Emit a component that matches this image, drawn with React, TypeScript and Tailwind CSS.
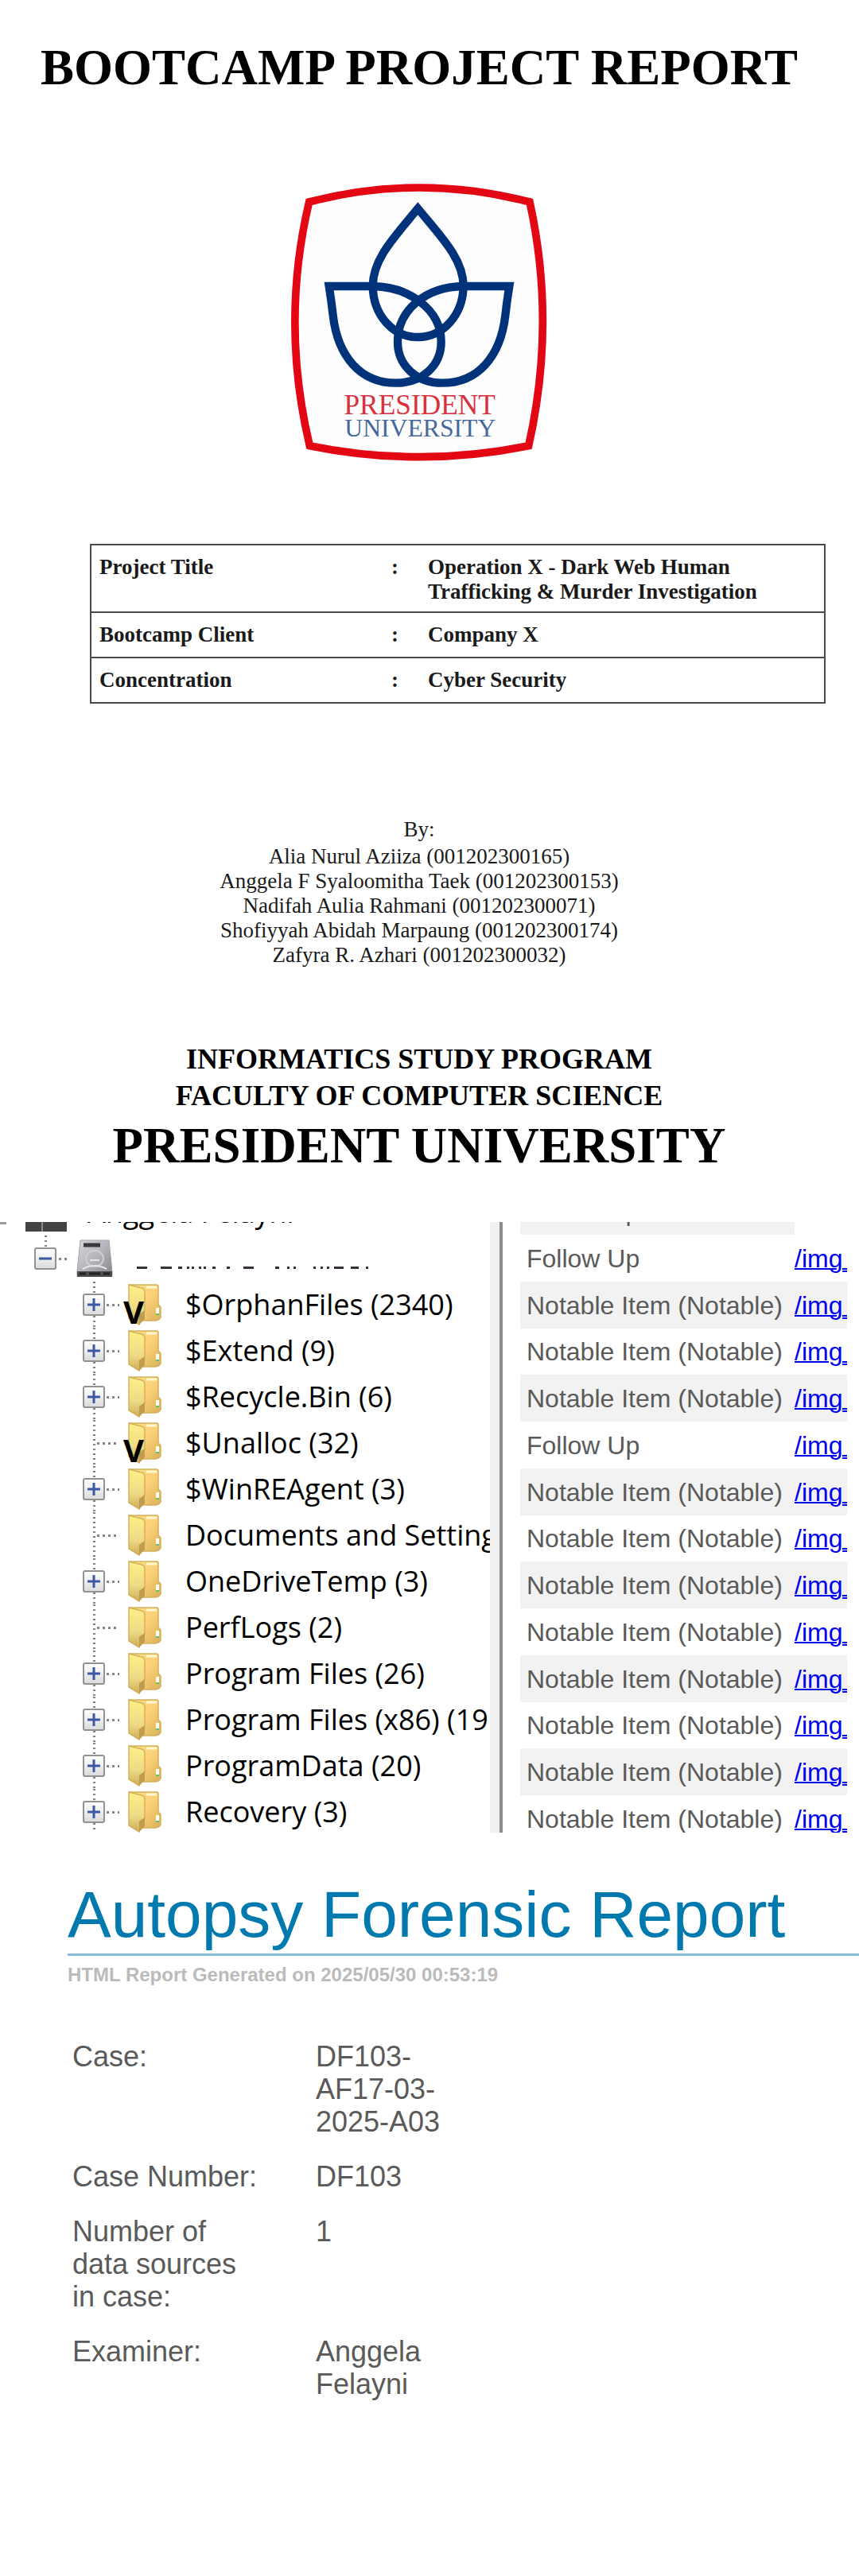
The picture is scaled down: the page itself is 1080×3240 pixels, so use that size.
import React from "react";

const details = [
  { label: "Project Title", value: ["Operation X - Dark Web Human", "Trafficking & Murder Investigation"] },
  { label: "Bootcamp Client", value: ["Company X"] },
  { label: "Concentration", value: ["Cyber Security"] },
];

const authors = [
  "Alia Nurul Aziiza (001202300165)",
  "Anggela F Syaloomitha Taek (001202300153)",
  "Nadifah Aulia Rahmani (001202300071)",
  "Shofiyyah Abidah Marpaung (001202300174)",
  "Zafyra R. Azhari (001202300032)",
];

const folders = [
  { name: "$OrphanFiles (2340)", expandable: true, marked: true },
  { name: "$Extend (9)", expandable: true },
  { name: "$Recycle.Bin (6)", expandable: true },
  { name: "$Unalloc (32)", marked: true },
  { name: "$WinREAgent (3)", expandable: true },
  { name: "Documents and Setting", expandable: false },
  { name: "OneDriveTemp (3)", expandable: true },
  { name: "PerfLogs (2)", expandable: false },
  { name: "Program Files (26)", expandable: true },
  { name: "Program Files (x86) (19", expandable: true },
  { name: "ProgramData (20)", expandable: true },
  { name: "Recovery (3)", expandable: true },
];

const NOTABLE = "Notable Item (Notable)";
const tags = [
  "Follow Up",
  "Follow Up",
  NOTABLE,
  NOTABLE,
  NOTABLE,
  "Follow Up",
  NOTABLE,
  NOTABLE,
  NOTABLE,
  NOTABLE,
  NOTABLE,
  NOTABLE,
  NOTABLE,
  NOTABLE,
];

// Remaining strokes of the redacted device name: [x, width]
const remnants = [
  [0, 13], [30, 14], [52, 5], [63, 3], [69, 3], [78, 3], [84, 3], [95, 4], [113, 4], [134, 13],
  [174, 5], [189, 3], [197, 3], [222, 3], [231, 3], [239, 3], [248, 12], [269, 10], [288, 3],
];

function Logo() {
  return (
    <svg viewBox="0 0 1110 1170" className="mx-auto block h-[390px] w-[370px]" role="img" aria-label="President University">
      <path
        d="M146 132 Q560 24 978 132 Q1078 588 974 1052 Q560 1136 148 1052 Q38 588 146 132 Z"
        fill="#fdfdfd"
        stroke="#e30613"
        strokeWidth="29"
      />
      <g fill="none" stroke="#00337a" strokeWidth="31" strokeMiterlimit="10">
        <path d="M556 157 C470 262 386 346 386 450 C388 560 462 642 556 642 C650 642 726 560 728 450 C728 346 642 262 556 157 Z" />
        <path d="M221 450 H386 C520 452 644 536 644 660 C644 750 572 815 474 815 C340 815 254 716 236 560 Q230 506 221 450 Z" />
        <path d="M901 450 H728 C590 452 480 536 480 660 C480 750 552 815 648 815 C782 815 868 716 886 560 Q892 506 901 450 Z" />
      </g>
      <g fontFamily="'Liberation Serif', serif" textAnchor="middle">
        <text x="563" y="934" fontSize="106" fill="#d9303c">PRESIDENT</text>
        <text x="565" y="1017" fontSize="95" fill="#47699a">UNIVERSITY</text>
      </g>
    </svg>
  );
}

function FolderIcon() {
  return (
    <svg viewBox="0 0 42 52" className="block h-[52px] w-[42px]" aria-hidden="true">
      <defs>
        <linearGradient id="back" x1="0" x2="1" y1="0" y2="1">
          <stop offset="0" stopColor="#fbe08c" />
          <stop offset="0.5" stopColor="#fdd078" />
          <stop offset="1" stopColor="#d6b258" />
        </linearGradient>
        <linearGradient id="flap" x1="0" x2="0" y1="0" y2="1">
          <stop offset="0" stopColor="#fdf086" />
          <stop offset="0.6" stopColor="#eedb86" />
          <stop offset="1" stopColor="#cfac57" />
        </linearGradient>
      </defs>
      <path d="M2 1 H36 Q38 1 38 3 V26 L41 29 V42 Q38 46 34 46 H14 Z" fill="url(#back)" stroke="#d3b15c" strokeWidth="1.5" />
      <path d="M23 4 H36" stroke="#fff7cf" strokeWidth="3" />
      <path d="M37 30 V39" stroke="#fffdf2" strokeWidth="4" />
      <path d="M35 38 H39" stroke="#64c070" strokeWidth="2" />
      <path d="M1 1 L17 5 Q21 6 21 10 V34 L14 51 L1 43 Z" fill="url(#flap)" stroke="#d3b15c" strokeWidth="1.5" />
      <path d="M14 51 V38 L21 33 V44 Z" fill="#c19c4d" />
    </svg>
  );
}

function DriveIcon() {
  return (
    <svg viewBox="0 0 46 50" className="block h-[50px] w-[46px]" aria-hidden="true">
      <defs>
        <linearGradient id="metal" x1="0" x2="1" y1="0" y2="1">
          <stop offset="0" stopColor="#d6d6da" />
          <stop offset="0.5" stopColor="#b4b4ba" />
          <stop offset="1" stopColor="#83838a" />
        </linearGradient>
      </defs>
      <path d="M5 2 H41 L45 41 V47 H1 V41 Z" fill="url(#metal)" stroke="#a2a2a7" />
      <path d="M9 8 H30" stroke="#39393c" strokeWidth="5" />
      <ellipse cx="23" cy="25" rx="11" ry="10" fill="none" stroke="#d0d0d4" strokeWidth="2" />
      <path d="M17 27 H29 M8 38 Q23 30 38 38" fill="none" stroke="#e4e4e8" strokeWidth="2" />
      <path d="M1 41 H45 V48 H1 Z" fill="#4b4b4f" />
      <path d="M4 44 H12 M16 44 H30 M34 44 H42" stroke="#222" strokeWidth="3" />
    </svg>
  );
}

function Toggle({ open, label }: { open?: boolean; label: string }) {
  return (
    <button
      type="button"
      aria-label={label}
      aria-expanded={!!open}
      className="flex size-7 shrink-0 items-center justify-center rounded-[3px] border-2 border-[#929292] bg-linear-to-b from-white to-[#dcdcdc]"
    >
      <svg viewBox="0 0 18 18" className="size-[18px]" aria-hidden="true">
        <path d={open ? "M1 9 H17" : "M1 9 H17 M9 1 V17"} stroke="#3b5aa5" strokeWidth="3" />
      </svg>
    </button>
  );
}

function VDots() {
  return <span className="w-[3px] flex-1 bg-[repeating-linear-gradient(to_bottom,#858585_0_2px,transparent_2px_6px)]" />;
}

function Tree() {
  return (
    <ul className="-mt-[41px] font-['Open_Sans',sans-serif] text-[36px] leading-[58px] whitespace-nowrap text-black">
      <li className="flex h-[58px] items-end">
        <span className="mb-[14px] h-[3px] w-2 bg-[#9a9a9a]" />
        <svg viewBox="0 0 52 40" className="mb-[5px] ml-6 h-10 w-[52px]" aria-hidden="true">
          <path d="M0 0 H52 V40 H0 Z" fill="#434343" />
          <path d="M21 0 V40" stroke="#8a8a8a" strokeWidth="2" />
        </svg>
        <span className="ml-[26px]">Anggela Felayni</span>
      </li>
      <li className="flex h-[58px] items-center pl-[43px]">
        <span className="flex h-full w-7 flex-col items-center">
          <VDots />
          <Toggle open label="Collapse device" />
          <span className="flex-1" />
        </span>
        <span className="ml-[3px] h-[3px] w-[10px] bg-[repeating-linear-gradient(to_right,#858585_0_3px,transparent_3px_7px)]" />
        <span className="ml-3">
          <DriveIcon />
        </span>
        <svg viewBox="0 0 292 4" className="mt-6 ml-[30px] h-1 w-[292px]" aria-hidden="true">
          {remnants.map(([x, w]) => (
            <rect key={x} x={x} y="0" width={w} height="3" fill="#3a2f3c" />
          ))}
        </svg>
      </li>
      {folders.map((f) => (
        <li key={f.name} className="flex h-[58px] items-center pl-[104px]">
          <span className="flex h-full w-7 shrink-0 flex-col items-center">
            <VDots />
            {f.expandable && <Toggle label={`Expand ${f.name}`} />}
            {f.expandable && <VDots />}
          </span>
          <span
            className={
              f.expandable
                ? "ml-[2px] h-[3px] w-4 shrink-0 bg-[repeating-linear-gradient(to_right,#858585_0_3px,transparent_3px_7px)]"
                : "-ml-[10px] h-[3px] w-7 shrink-0 bg-[repeating-linear-gradient(to_right,#858585_0_3px,transparent_3px_7px)]"
            }
          />
          <span className="relative ml-[11px] shrink-0">
            <FolderIcon />
            {f.marked && (
              <span className="absolute top-[17px] -left-[6px] h-9 text-[40px] leading-9 font-bold">V</span>
            )}
          </span>
          <span className="ml-[30px]">{f.name}</span>
        </li>
      ))}
    </ul>
  );
}

function Tags() {
  return (
    <table className="-mt-[43px] ml-[22px] w-[calc(100%-22px)] table-fixed border-collapse font-['Liberation_Sans',sans-serif] text-[32px] leading-9 whitespace-nowrap">
      <tbody>
        {tags.map((tag, i) => (
          <tr key={i} className="h-[59px] odd:bg-[#f2f2f2] nth-[4n]:h-[58px]">
            <td className="w-[345px] pl-2 text-[#5a5a5a]">{tag}</td>
            <td className={i === 0 ? "bg-white" : ""}>
              {i > 0 && (
                <a href="#" className="text-[#0000f0] underline decoration-2">
                  /img_
                </a>
              )}
            </td>
          </tr>
        ))}
      </tbody>
    </table>
  );
}

const caseInfo: { label: string; value: React.ReactNode }[] = [
  { label: "Case:", value: <>DF103-<wbr />AF17-03-<wbr />2025-A03</> },
  { label: "Case Number:", value: "DF103" },
  { label: "Number of data sources in case:", value: "1" },
  { label: "Examiner:", value: "Anggela Felayni" },
];

export default function App() {
  return (
    <main className="min-h-screen bg-white">
      <section className="pt-[49px] pr-[26px] font-['Liberation_Serif',serif] text-black">
        <h1 className="text-center text-[63px] leading-[72px] font-bold whitespace-nowrap">BOOTCAMP PROJECT REPORT</h1>
        <div className="mt-[89px] pr-1">
          <Logo />
        </div>
        <div className="mt-[84px] pr-[16px] pl-[113px]">
          <table className="w-full border-collapse text-[27px] leading-[31px] font-bold text-[#1a1a1a]">
            <tbody>
              {details.map((d) => (
                <tr key={d.label} className="h-[57px] border-2 border-[#4a4a4a] align-top">
                  <th scope="row" className="w-[378px] pt-3 pb-[9px] pl-[10px] text-left">{d.label}</th>
                  <td className="w-[46px] pt-3">:</td>
                  <td className="pt-3 pb-[9px]">
                    {d.value.map((line) => (
                      <div key={line}>{line}</div>
                    ))}
                  </td>
                </tr>
              ))}
            </tbody>
          </table>
        </div>
        <div className="mt-[143px] text-center text-[27px] leading-[31px] text-[#1a1a1a]">
          <p>By:</p>
          <ul className="mt-[3px]">
            {authors.map((a) => (
              <li key={a}>{a}</li>
            ))}
          </ul>
        </div>
        <div className="mt-[92px] text-center font-bold">
          <p className="text-[36px] leading-[46px]">INFORMATICS STUDY PROGRAM</p>
          <p className="text-[36px] leading-[46px]">FACULTY OF COMPUTER SCIENCE</p>
          <p className="mt-1 text-[63px] leading-[72px]">PRESIDENT UNIVERSITY</p>
        </div>
      </section>

      <section className="mt-[60px] flex h-[768px] pr-[15px]">
        <div className="w-[616px] shrink-0 overflow-hidden">
          <Tree />
        </div>
        <div className="w-4 shrink-0 border-r-4 border-[#8c8c8c] bg-[#f0f0f0]" />
        <div className="min-w-0 flex-1 overflow-hidden">
          <Tags />
        </div>
      </section>

      <section className="mt-[57px] pb-20 pl-[85px] font-['Liberation_Sans',sans-serif]">
        <h2 className="border-b-[3px] border-[#86bddc] pb-[3px] text-[82px] leading-[92px] whitespace-nowrap text-[#0079ae]">
          Autopsy Forensic Report
        </h2>
        <p className="mt-[10px] text-[24px] leading-7 font-bold text-[#bbbbbb]">HTML Report Generated on 2025/05/30 00:53:19</p>
        <dl className="mt-[68px] flex flex-col gap-7 pl-[6px] text-[36px] leading-[41px] text-[#5a5a5a]">
          {caseInfo.map((c) => (
            <div key={c.label} className="flex gap-[66px]">
              <dt className="w-[240px]">{c.label}</dt>
              <dd className="w-[170px]">{c.value}</dd>
            </div>
          ))}
        </dl>
      </section>
    </main>
  );
}
